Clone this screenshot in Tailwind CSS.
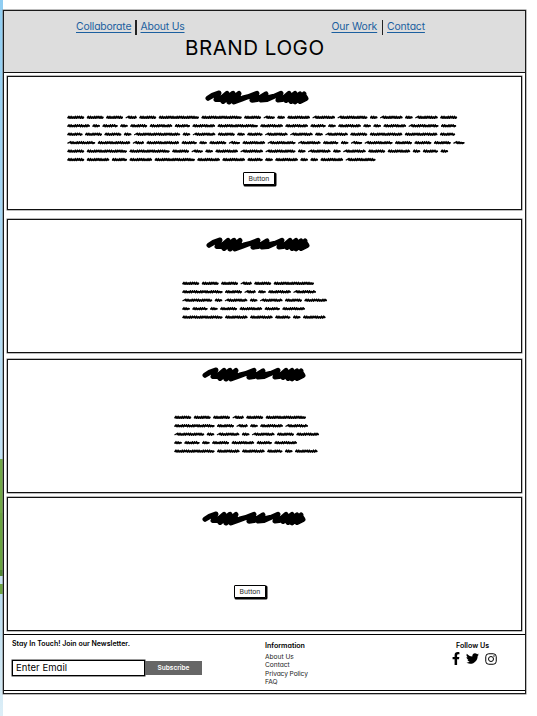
<!DOCTYPE html>
<html lang="en">
<head>
<meta charset="utf-8">
<title>Brand</title>
<script src="https://cdn.jsdelivr.net/npm/@tailwindcss/browser@4"></script>
</head>
<body class="flex h-[716px] w-[537px] overflow-hidden bg-white font-['Inter',sans-serif] text-black [font-feature-settings:'cv11']">
<svg width="0" height="0" class="absolute">
  <symbol id="scribble" viewBox="0 0 104 15">
    <path d="M3 8.300 Q8 4.500 14 3 L11 9.500 L15 9.500 L22 3.500 L18 11.500 L28 3.300 L24 12 L34 3.500 L29 12 L36 9.500 L52 3.300 L47 10.200 L52 9.500 L61 4 L56 10 L62 9.500 L76 3.300 L73 10 L77 9.500 L84 3.500 L81 10.500 L90 3.500 L86 11.500 L95 4 L90 12 L99 4 L95 11.500 L101 8.500 L99 5.500 L84 8.500 M14 8.500 L20 8 M21 9 L34 7.500 M38 8 L44 6.500 M50 8 L58 7 M62 8 L68 6.500" fill="none" stroke="#000" stroke-width="5" stroke-linecap="round" stroke-linejoin="round"/>
  </symbol>
</svg>

<aside class="flex h-full w-[3px] shrink-0 flex-col">
  <div class="h-[459px] bg-linear-to-b from-[#8fcdf2] via-[#a9d8f4] to-[#c3e3f5]"></div>
  <div class="h-[54px] bg-[#70a846]"></div>
  <div class="h-[57px] bg-[#68a33f]"></div>
  <div class="h-[6px] bg-[#4f8630]"></div>
  <div class="h-[8px] bg-[#c5e0ef]"></div>
  <div class="h-[10px] bg-[#6aa23f]"></div>
  <div class="grow bg-linear-to-b from-[#b9dcef] to-[#dceef7]"></div>
</aside>

<main class="mt-[10px] flex h-[684px] w-[523px] flex-col border border-[#1a1a1a] shadow-[0_0_0_0.5px_#777]">
  <header class="h-[62px] shrink-0 border-b border-[#111] bg-[#ddd]">
    <nav class="flex h-[23px] items-end pl-[72px] text-[10.4px] leading-[14px] text-[#1b5f9f]">
      <a class="w-[55px] whitespace-nowrap tracking-[-0.18px] underline underline-offset-2">Collaborate</a>
      <i class="mx-[4px] mb-[-1px] h-[15px] w-[1.5px] bg-[#222]"></i>
      <a class="w-[44px] whitespace-nowrap tracking-[-0.18px] underline underline-offset-2">About Us</a>
      <a class="ml-[147px] w-[46px] whitespace-nowrap tracking-[-0.12px] underline underline-offset-2">Our Work</a>
      <i class="mx-[4px] mb-[-1px] h-[15px] w-[1.5px] bg-[#222]"></i>
      <a class="w-[38px] whitespace-nowrap tracking-[-0.15px] underline underline-offset-2">Contact</a>
    </nav>
    <h1 class="pl-[181px] text-[20.5px] leading-[28px] tracking-[0.52px] whitespace-nowrap">BRAND LOGO</h1>
  </header>

  <section class="mt-[3px] ml-[3px] h-[134px] w-[515px] shrink-0 border border-[#111] shadow-[0_0_0_0.5px_#777]">
    <svg class="mt-[13px] ml-[197px] h-[15px] w-[104px]"><use href="#scribble"/></svg>
    <svg class="mt-[8px] ml-[59px] h-[53px] w-[400px]" data-lines="50 50 50 -33 50 120 120 50 -33 22 67 -67 -89 22 -67 22 -67 50|67 22 45 22 50 67 45 67 120 67 67 45 22 67 22 22 67 -89 45|45 50 50 22 -138 22 -67 50 22 45 -67 -67 22 -67 50 97 97 45|-83 97 -33 97 45 22 50 -33 67 -83 -67 45 22 -33 -83 50 50 50 -33|50 120 120 50 -33 22 67 -67 -89 22 -67 22 -67 50 67 22 45 22|50 67 45 67 120 67 67 45 22 67 22 22 67 -89"></svg>
    <button class="mt-[6px] ml-[235px] block h-[13px] w-[32px] rounded-[1px] border-[1.5px] border-black bg-white text-[6.8px] leading-[11px] text-[#222] shadow-[1px_1px_0_0.5px_#000]">Button</button>
  </section>

  <section class="mt-[9px] ml-[3px] h-[134px] w-[515px] shrink-0 border border-[#111] shadow-[0_0_0_0.5px_#777]">
    <svg class="mt-[17px] ml-[198px] h-[15px] w-[104px]"><use href="#scribble"/></svg>
    <svg class="mt-[27px] ml-[174px] h-[45px] w-[160px]" data-lines="50 50 50 -33 50 120|120 50 -33 22 67 -67|-89 22 -67 22 -67 50 67|22 45 22 50 67 45 67|120 67 67 45 22 67"></svg>
  </section>

  <section class="mt-[6px] ml-[3px] h-[134px] w-[515px] shrink-0 border border-[#111] shadow-[0_0_0_0.5px_#777]">
    <svg class="mt-[7px] ml-[194px] h-[15px] w-[104px]"><use href="#scribble"/></svg>
    <svg class="mt-[31px] ml-[166px] h-[45px] w-[160px]" data-lines="50 50 50 -33 50 120|120 50 -33 22 67 -67|-89 22 -67 22 -67 50 67|22 45 22 50 67 45 67|120 67 67 45 22 67"></svg>
  </section>

  <section class="mt-[4px] ml-[3px] h-[134px] w-[515px] shrink-0 border border-[#111] shadow-[0_0_0_0.5px_#777]">
    <svg class="mt-[13px] ml-[194px] h-[15px] w-[104px]"><use href="#scribble"/></svg>
    <button class="mt-[59px] ml-[226px] block h-[13px] w-[32px] rounded-[1px] border-[1.5px] border-black bg-white text-[6.8px] leading-[11px] text-[#222] shadow-[1px_1px_0_0.5px_#000]">Button</button>
  </section>

  <footer class="mt-[3px] flex h-[57px] shrink-0 border-y border-black">
    <div class="w-[261px] pt-[4px] pl-[8px]">
      <p class="text-[7px] leading-[10px] font-semibold whitespace-nowrap">Stay In Touch! Join our Newsletter.</p>
      <div class="mt-[11px] flex h-[15px] items-center">
        <div class="h-[16px] w-[133px] border-[1.5px] border-black pl-[3px] text-[9.500px] leading-[13px] tracking-[0.05px] shadow-[0_0_0_0.5px_#333]">Enter Email</div>
        <div class="h-[14px] w-[57px] bg-[#666] text-center text-[6.5px] leading-[14px] font-semibold text-white">Subscribe</div>
      </div>
    </div>
    <div class="w-[187px] pt-[6px] text-[6.6px] leading-[8.4px] text-[#222]">
      <p class="mb-[3px] text-[7.1px] leading-[9px] font-semibold text-black">Information</p>
      <p>About Us</p><p>Contact</p><p class="tracking-[-0.08px]">Privacy Policy</p><p>FAQ</p>
    </div>
    <div class="pt-[6px]">
      <p class="pl-[4px] text-[7.1px] leading-[10px] font-semibold whitespace-nowrap">Follow Us</p>
      <div class="mt-[1px] flex items-center">
        <svg class="h-[13px] w-[8px]" viewBox="0 0 320 512"><path d="M279 288l14-93h-89v-60c0-25 13-50 53-50h40V7s-37-7-72-7c-73 0-121 44-121 125v70H23v93h81v224h100V288z"/></svg>
        <svg class="ml-[6px] h-[13px] w-[13px]" viewBox="0 0 512 512"><path d="M459 152c.3 4.500.3 9 .3 13.600 0 139-106 299-299 299-59 0-115-17-161-47 8 1 16 1.300 25 1.300 49 0 94-17 130-45-46-1-85-31-98-73 6.500 1 13 1.600 20 1.600 9.400 0 19-1.300 28-3.600-48-10-84-52-84-103v-1.300c14 8 30 13 47 14-28-19-47-51-47-87 0-19 5-37 14-53 52 64 129 105 216 110-1.600-8-2.600-16-2.600-24 0-58 47-105 105-105 30 0 58 13 77 33 24-4.500 46-13 67-25-8 24-24 45-46 58 21-2 42-8 60-16-14 21-32 39-52 54z"/></svg>
        <svg class="ml-[6px] h-[12px] w-[12px]" viewBox="0 0 24 24" fill="none" stroke="#000" stroke-width="2"><rect x="1.500" y="1.500" width="21" height="21" rx="6"/><circle cx="12" cy="12" r="5"/><circle cx="18" cy="6" r="0.6"/></svg>
      </div>
    </div>
  </footer>
</main>

<script>
// Each number is a word's width in thirds of a pixel; negative words open with a thin dash.
document.querySelectorAll('svg[data-lines]').forEach(function (svg) {
  var out = '';
  svg.dataset.lines.split('|').forEach(function (line, row) {
    var x = 0.9, y = 4.300 + row * 8.450;
    line.split(' ').forEach(function (n) {
      var dash = n < 0, w = Math.abs(n) / 3, end = x + w - 1.200;
      var d = 'M' + x + ' ' + (y + 0.5), i = 0;
      for (var px = x + (dash ? 3 : 1.100); px < end - 0.5; px += 1.050, i++) {
        var a = i % 5 === 4 ? 0.5 : 1.150;
        d += 'L' + px + ' ' + (y + (i % 2 ? a : -a));
      }
      d += 'L' + end + ' ' + y;
      var s = x + (dash ? 2.500 : 0.5);
      out += '<path d="' + d + '" stroke-width="1.200"/>';
      out += '<path d="M' + s + ' ' + (y + 0.2) + 'H' + end + '" stroke-width="1.800"/>';
      x += w + 2.740;
    });
  });
  svg.innerHTML = '<g fill="none" stroke="#000" stroke-linecap="round" stroke-linejoin="round">' + out + '</g>';
});
</script>
</body>
</html>
